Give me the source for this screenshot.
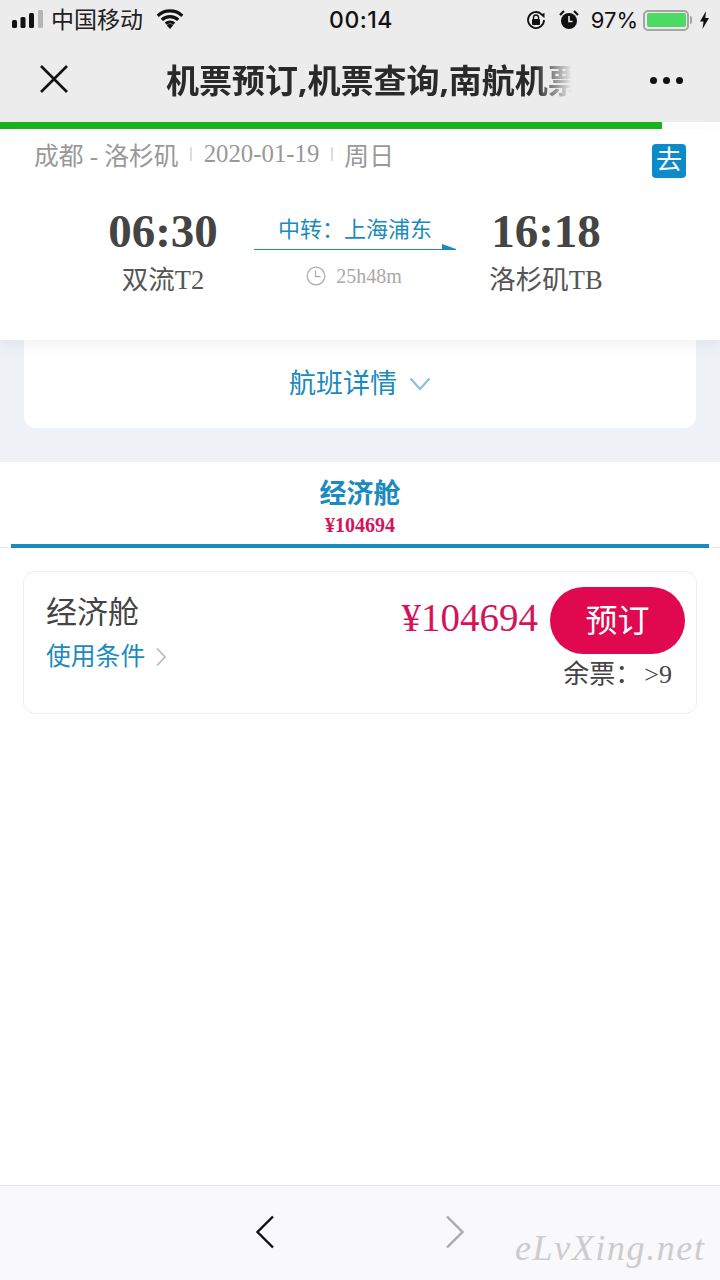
<div class="page">
  <header class="top">
    <div class="status">
      <div class="status-left">
        <svg class="signal" width="32" height="22" viewBox="0 0 32 22" aria-hidden="true">
          <rect x="0" y="13" width="5" height="8" rx="1.5" fill="#111" />
          <rect x="8.5" y="10" width="5" height="11" rx="1.5" fill="#111" />
          <rect x="17" y="6" width="5" height="15" rx="1.5" fill="#111" />
          <rect x="26" y="3" width="5" height="18" rx="1.5" fill="#b5b5b5" />
        </svg>
        <span class="carrier">中国移动</span>
        <svg class="wifi" width="28" height="20" viewBox="0 0 30 22" aria-hidden="true">
          <path d="M1.5 7.5a19.5 19.5 0 0 1 27 0M6 12a13 13 0 0 1 18 0M10.4 16.2a6.6 6.6 0 0 1 9.2 0" fill="none" stroke="#111" stroke-width="3.6" />
          <path d="M15 22l-3.4-3.8a4.4 4.4 0 0 1 6.8 0z" fill="#111" />
        </svg>
      </div>
      <span class="clock">00:14</span>
      <div class="status-right">
        <svg width="22" height="22" viewBox="0 0 22 22" aria-hidden="true">
          <path d="M19 11a8 8 0 1 1-2.6-5.9" fill="none" stroke="#111" stroke-width="1.8" />
          <path d="M15 5.5l4.5-1.5v5z" fill="#111" />
          <rect x="7" y="10" width="8" height="6" rx="1" fill="#111" />
          <path d="M8.5 10V8.5a2.5 2.5 0 0 1 5 0V10" fill="none" stroke="#111" stroke-width="1.4" />
        </svg>
        <svg class="alarm" width="22" height="22" viewBox="0 0 22 22" aria-hidden="true">
          <circle cx="11" cy="12" r="8" fill="#111" />
          <path d="M11 7v5.5h3.5" fill="none" stroke="#ececec" stroke-width="1.6" />
          <path d="M2 6l4-4M20 6l-4-4" stroke="#111" stroke-width="2.2" />
        </svg>
        <span class="pct">97%</span>
        <div class="battery"><div class="battery-fill"></div></div>
        <svg width="11" height="18" viewBox="0 0 10 18" aria-hidden="true">
          <path d="M6.5 0L0.5 10.5h3.5L3 18l6.5-11H5.8z" fill="#111" />
        </svg>
      </div>
    </div>
    <div class="nav">
      <svg class="close" width="30" height="30" viewBox="0 0 30 30" aria-hidden="true">
        <path d="M2 2l26 26M28 2L2 28" fill="none" stroke="#111" stroke-width="2.6" />
      </svg>
      <div class="nav-title">机票预订,机票查询,南航机票</div>
      <div class="dots"><i></i><i></i><i></i></div>
    </div>
  </header>

  <div class="progress"><div class="progress-fill"></div></div>

  <section class="flight">
    <div class="route">
      <span>成都 - 洛杉矶</span>
      <i class="sep"></i>
      <span>2020-01-19</span>
      <i class="sep"></i>
      <span>周日</span>
      <b class="go">去</b>
    </div>
    <div class="times">
      <div class="end">
        <div class="time">06:30</div>
        <div class="place">双流T2</div>
      </div>
      <div class="mid">
        <div class="transfer">中转：上海浦东</div>
        <svg class="arrow" width="202" height="8" viewBox="0 0 202 8" aria-hidden="true">
          <path d="M0 7h202v-1L188 1v5H0z" fill="#1a8bbd" />
        </svg>
        <div class="duration">
          <svg width="20" height="20" viewBox="0 0 20 20" aria-hidden="true">
            <circle cx="10" cy="10" r="8.8" fill="none" stroke="#aaa" stroke-width="1.2" />
            <path d="M9.5 4.5v6.2h5" fill="none" stroke="#aaa" stroke-width="1.2" />
          </svg>
          <span>25h48m</span>
        </div>
      </div>
      <div class="end">
        <div class="time">16:18</div>
        <div class="place">洛杉矶TB</div>
      </div>
    </div>
  </section>

  <section class="summary">
    <div class="details">
      <span>航班详情</span>
      <svg width="22" height="14" viewBox="0 0 22 14" aria-hidden="true">
        <path d="M1.5 1.5L11 12l9.5-10.5" fill="none" stroke="#8cc3dc" stroke-width="2.2" />
      </svg>
    </div>
  </section>

  <section class="tabs">
    <div class="tab-name">经济舱</div>
    <div class="tab-price">¥104694</div>
    <div class="tab-line"></div>
  </section>

  <main class="content">
    <div class="fare">
      <div class="fare-left">
        <div class="fare-name">经济舱</div>
        <div class="terms">
          <span>使用条件</span>
          <svg width="12" height="20" viewBox="0 0 12 20" aria-hidden="true">
            <path d="M2 1.5L10 10l-8 8.5" fill="none" stroke="#bbb" stroke-width="1.8" />
          </svg>
        </div>
      </div>
      <div class="fare-right">
        <div class="buy">
          <span class="price">¥104694</span>
          <button class="book">预订</button>
        </div>
        <div class="left-count">余票：<span>&gt;9</span></div>
      </div>
    </div>
  </main>

  <footer class="bottom">
    <svg width="20" height="34" viewBox="0 0 20 34" aria-hidden="true">
      <path d="M18 1.5L2.5 17 18 32.5" fill="none" stroke="#111" stroke-width="2.4" />
    </svg>
    <svg width="20" height="34" viewBox="0 0 20 34" aria-hidden="true">
      <path d="M2 1.5L17.5 17 2 32.5" fill="none" stroke="#aaa" stroke-width="2.4" />
    </svg>
    <span class="mark">eLvXing.net</span>
  </footer>
</div>

<style>
  :global(body) {
    background: #fff;
  }

  .page {
    width: 720px;
    height: 1280px;
    display: flex;
    flex-direction: column;
    overflow: hidden;
    position: relative;
    font-family: "Liberation Serif", "Noto Sans CJK SC", serif;
    color: #444;
  }

  .top {
    height: 122px;
    background: #ececec;
    flex: none;
    font-family: "Noto Sans", "Noto Sans CJK SC", sans-serif;
    color: #111;
  }

  .status {
    height: 40px;
    display: grid;
    grid-template-columns: 1fr auto 1fr;
    align-items: center;
    padding: 0 10px 0 12px;
  }

  .status-left,
  .status-right {
    display: flex;
    align-items: center;
  }

  .status-right {
    justify-content: flex-end;
    gap: 9px;
  }

  .signal {
    margin-top: -4px;
  }

  .carrier {
    font-size: 23px;
    line-height: 30px;
    margin: -3px 0 0 7px;
    color: #222;
  }

  .wifi {
    margin: -3px 0 0 13px;
  }

  .clock {
    font-size: 23px;
    font-weight: 500;
    font-family: Inter, sans-serif;
    letter-spacing: 0.5px;
  }

  .pct {
    font-size: 22px;
    font-family: Inter, sans-serif;
    font-weight: 400;
    margin: 0 -4px 0 2px;
  }

  .alarm {
    margin-left: 2px;
  }

  .battery {
    width: 46px;
    height: 21px;
    box-sizing: border-box;
    border: 2px solid #a5a5a5;
    border-radius: 5px;
    padding: 1.5px;
    margin-right: 1px;
    position: relative;
  }

  .battery::after {
    content: "";
    position: absolute;
    right: -5px;
    top: 4px;
    width: 2px;
    height: 8px;
    background: #a5a5a5;
    border-radius: 0 2px 2px 0;
  }

  .battery-fill {
    height: 100%;
    background: #4cd964;
    border-radius: 2px;
  }

  .nav {
    height: 82px;
    display: flex;
    align-items: center;
    padding-bottom: 4px;
    box-sizing: border-box;
  }

  .close {
    margin-left: 39px;
    flex: none;
  }

  .nav-title {
    width: 406px;
    margin-left: 97px;
    flex: none;
    white-space: nowrap;
    overflow: hidden;
    font-size: 33px;
    font-weight: 700;
    color: #2a2a2a;
    -webkit-mask-image: linear-gradient(to right, #000 91%, transparent);
    mask-image: linear-gradient(to right, #000 91%, transparent);
  }

  .dots {
    display: flex;
    gap: 6px;
    margin: 2px 0 0 78px;
  }

  .dots i {
    width: 7px;
    height: 7px;
    border-radius: 50%;
    background: #111;
  }

  .progress {
    height: 7px;
    flex: none;
    background: #fff;
  }

  .progress-fill {
    width: 662px;
    height: 100%;
    background: #18b31c;
  }

  .flight {
    height: 211px;
    flex: none;
    background: #fff;
    box-shadow: 0 4px 14px rgba(120, 130, 140, 0.12);
    position: relative;
    z-index: 1;
    box-sizing: border-box;
    padding-top: 7px;
  }

  .route {
    display: flex;
    align-items: center;
    height: 36px;
    padding-left: 34px;
    font-size: 24.8px;
    color: #999;
    position: relative;
  }

  .sep {
    width: 2px;
    height: 14px;
    background: #ddd;
    margin: 0 11.5px;
  }

  .go {
    position: absolute;
    right: 34px;
    top: 8px;
    width: 34px;
    height: 34px;
    border-radius: 4px;
    background: #0d8bc9;
    color: #fff;
    font-size: 26px;
    font-weight: 400;
    line-height: 34px;
    text-align: center;
  }

  .times {
    display: grid;
    grid-template-columns: 182px 202px 180px;
    margin-top: 33px;
    padding-left: 72px;
  }

  .end {
    text-align: center;
  }

  .time {
    font-size: 47px;
    font-weight: 700;
    line-height: 52px;
    color: #444;
  }

  .place {
    font-size: 26.5px;
    line-height: 40px;
    color: #555;
    margin-top: 3px;
  }

  .mid {
    text-align: center;
    padding-top: 10px;
  }

  .transfer {
    font-size: 22px;
    line-height: 30px;
    color: #1a8bbd;
    white-space: nowrap;
  }

  .arrow {
    display: block;
    margin-top: -2px;
  }

  .duration {
    display: flex;
    justify-content: center;
    align-items: center;
    gap: 10px;
    font-size: 20px;
    color: #aaa;
    margin: 13px 0 0 -2px;
    height: 24px;
  }

  .summary {
    height: 122px;
    flex: none;
    background: #eef1f5;
    padding: 0 24px;
    box-sizing: border-box;
  }

  .details {
    height: 88px;
    background: #fff;
    border-radius: 0 0 12px 12px;
    display: flex;
    align-items: center;
    justify-content: center;
    gap: 12px;
    font-size: 27px;
    color: #1a8bbd;
    padding-bottom: 6px;
    box-sizing: border-box;
  }

  .details svg {
    margin-top: 5px;
  }

  .tabs {
    height: 86px;
    flex: none;
    background: #fff;
    text-align: center;
    border-bottom: 1px solid #e8e8e8;
    box-sizing: border-box;
    padding-top: 12px;
    position: relative;
  }

  .tab-name {
    font-size: 27px;
    line-height: 36px;
    font-weight: 700;
    color: #1a8bbd;
    font-family: "Noto Sans CJK SC", sans-serif;
  }

  .tab-price {
    font-size: 20px;
    line-height: 24px;
    margin-top: 3px;
    font-weight: 700;
    color: #d5135a;
  }

  .tab-line {
    position: absolute;
    left: 11px;
    right: 11px;
    bottom: -1px;
    height: 4px;
    background: #1a8bbd;
  }

  .content {
    flex: 1;
    padding: 23px 23px 0;
  }

  .fare {
    height: 143px;
    box-sizing: border-box;
    border: 1px solid #eee;
    border-radius: 12px;
    display: flex;
    justify-content: space-between;
    padding: 15px 11px 0 22px;
  }

  .fare-name {
    font-size: 31px;
    line-height: 48px;
    color: #444;
    margin-top: 2px;
  }

  .terms {
    display: flex;
    align-items: center;
    gap: 10px;
    font-size: 24.8px;
    line-height: 36px;
    color: #1a8bbd;
    margin-top: 2px;
  }

  .fare-right {
    display: flex;
    flex-direction: column;
    align-items: flex-end;
  }

  .buy {
    display: flex;
    align-items: center;
    gap: 12px;
  }

  .price {
    font-size: 39px;
    color: #d5135a;
    padding-bottom: 6px;
  }

  .book {
    width: 135px;
    height: 67px;
    border: 0;
    border-radius: 34px;
    background: #e0084f;
    color: #fff;
    font: inherit;
    font-size: 32px;
    padding: 0 0 5px;
  }

  .left-count {
    font-size: 26px;
    line-height: 38px;
    color: #444;
    margin: 2px 13px 0 0;
    white-space: nowrap;
  }

  .left-count span {
    margin-left: 3px;
  }

  .bottom {
    height: 95px;
    flex: none;
    background: #f9f9fb;
    border-top: 1px solid #e6e6e6;
    box-sizing: border-box;
    display: flex;
    align-items: center;
    padding: 0 0 2px 255px;
    gap: 170px;
    position: relative;
  }

  .mark {
    position: absolute;
    left: 515px;
    top: 41px;
    font-size: 36px;
    font-style: italic;
    color: #ccc;
    letter-spacing: 1.6px;
  }
</style>
